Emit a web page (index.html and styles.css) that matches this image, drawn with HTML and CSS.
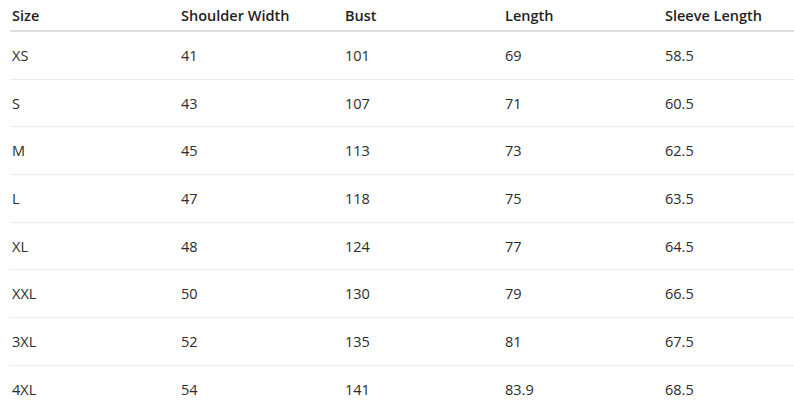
FILE: index.html
```html
<!DOCTYPE html>
<html lang="en">
<head>
<meta charset="utf-8">
<title>Size Chart</title>
<link rel="stylesheet" href="styles.css">
</head>
<body>
<table class="size-table">
  <colgroup>
    <col class="c1"><col class="c2"><col class="c3"><col class="c4"><col class="c5">
  </colgroup>
  <thead>
    <tr><th>Size</th><th>Shoulder Width</th><th>Bust</th><th>Length</th><th>Sleeve Length</th></tr>
  </thead>
  <tbody>
    <tr><td>XS</td><td>41</td><td>101</td><td>69</td><td>58.5</td></tr>
    <tr><td>S</td><td>43</td><td>107</td><td>71</td><td>60.5</td></tr>
    <tr><td>M</td><td>45</td><td>113</td><td>73</td><td>62.5</td></tr>
    <tr><td>L</td><td>47</td><td>118</td><td>75</td><td>63.5</td></tr>
    <tr><td>XL</td><td>48</td><td>124</td><td>77</td><td>64.5</td></tr>
    <tr><td>XXL</td><td>50</td><td>130</td><td>79</td><td>66.5</td></tr>
    <tr><td>3XL</td><td>52</td><td>135</td><td>81</td><td>67.5</td></tr>
    <tr><td>4XL</td><td>54</td><td>141</td><td>83.9</td><td>68.5</td></tr>
  </tbody>
</table>
</body>
</html>
```
FILE: styles.css
```css
html, body {
  margin: 0;
  padding: 0;
  background: #ffffff;
}
body {
  font-family: "Open Sans", "Noto Sans", "Liberation Sans", sans-serif;
  font-size: 14.5px;
  color: #2b2b2b;
  overflow: hidden;
}
.size-table {
  margin-left: 10px;
  width: 800px;
  border-collapse: collapse;
  table-layout: fixed;
}
.c1 { width: 169px; }
.c2 { width: 164px; }
.c3 { width: 160px; }
.c4 { width: 160px; }
.size-table th,
.size-table td {
  text-align: left;
  padding: 0 0 0 2px;
  vertical-align: middle;
}
.size-table th {
  height: 30px;
  font-weight: 600;
  color: #1f1f1f;
  border-bottom: 2px solid #dddddd;
}
.size-table td {
  height: 46.7px;
  border-top: 1px solid #ececec;
}
.size-table tbody tr:first-child td {
  border-top: none;
}
```
